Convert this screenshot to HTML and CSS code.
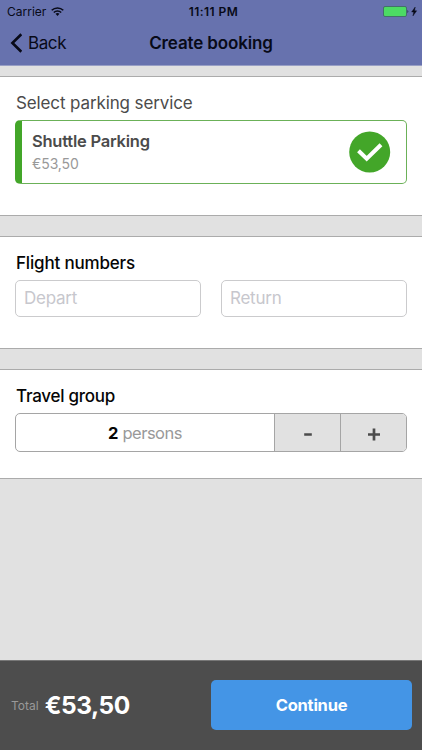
FILE: index.html
```html
<!DOCTYPE html>
<html lang="en">
<head>
<meta charset="utf-8">
<title>Create booking</title>
<link rel="stylesheet" href="styles.css">
</head>
<body>
<div class="app">
  <header class="header">
    <div class="status">
      <div class="carrier"><span class="t-carrier">Carrier</span>
        <svg width="13" height="9" viewBox="0 0 13 9"><g fill="none" stroke="#080a18" stroke-width="1.5"><path d="M.7 3.3a8.3 8.3 0 0 1 11.6 0"/><path d="M2.8 5.5a5.3 5.3 0 0 1 7.4 0"/></g><path d="M4.5 6.8a3 3 0 0 1 4 0L6.5 8.9z" fill="#080a18"/></svg>
      </div>
      <div class="time">11:11 PM</div>
      <svg class="battery" width="35" height="11" viewBox="0 0 35 11"><rect x=".5" y=".5" width="23" height="10" rx="1.5" fill="#4cdb64" stroke="#3d6262" stroke-width=".8"/><path d="M24.5 3.7q1.8 1.8 0 3.6z" fill="#1c2c3b"/><path d="M32.2 1 28.6 6h2.1l-.8 4 3.8-5.2h-2.1z" fill="#080a18" stroke="#080a18" stroke-width=".4"/></svg>
    </div>
    <nav class="nav">
      <div class="back"><svg width="12" height="20" viewBox="0 0 12 20"><path d="M11.300 1.300 2.400 10l8.900 8.700" fill="none" stroke="#080a18" stroke-width="2.600"/></svg><span class="t-back">Back</span></div>
      <div class="title">Create booking</div>
    </nav>
  </header>
  <main class="content">
    <section class="panel panel-service">
      <h2 class="heading muted">Select parking service</h2>
      <div class="service">
        <div class="service-info">
          <div class="name">Shuttle Parking</div>
          <div class="price">€53,50</div>
        </div>
        <svg width="42" height="42" viewBox="0 0 42 42"><circle cx="20.700" cy="21" r="20.500" fill="#43a629"/><path d="m9.500 19.800 8.200 8L32 13.800" fill="none" stroke="#fff" stroke-width="4"/></svg>
      </div>
    </section>
    <section class="panel panel-flights">
      <h2 class="heading h-flight">Flight numbers</h2>
      <div class="fields">
        <div class="field"><span class="t-depart">Depart</span></div>
        <div class="field"><span class="t-return">Return</span></div>
      </div>
    </section>
    <section class="panel panel-group">
      <h2 class="heading h-travel">Travel group</h2>
      <div class="stepper">
        <div class="count"><b>2</b><span class="persons">persons</span></div>
        <div class="step"><svg width="16" height="16" viewBox="0 0 16 16"><path d="M4.200 8.500h7.600" stroke="#4b4b4b" stroke-width="2.700"/></svg></div>
        <div class="step"><svg width="16" height="16" viewBox="0 0 16 16"><path d="M2 8.500h12M8 2.500v12" stroke="#4b4b4b" stroke-width="2.700"/></svg></div>
      </div>
    </section>
  </main>
  <footer class="footer">
    <div class="total"><span class="total-label">Total</span><span class="total-value">€53,50</span></div>
    <div class="continue">Continue</div>
  </footer>
</div>
</body>
</html>
```
FILE: styles.css
```css
* { box-sizing: border-box; }
body { margin: 0; font-family: Inter, "Liberation Sans", sans-serif; color: #050505; }
svg { display: block; flex: none; }
.app { height: 750px; display: flex; flex-direction: column; background: #e1e1e1; overflow: hidden; white-space: nowrap; }
.header { height: 66px; flex: none; background: #6772ae; border-bottom: 1px solid #989fc5; color: #080a18; }
.status { height: 22px; display: grid; grid-template-columns: 1fr auto 1fr; align-items: center; padding: 0 4px 0 7px; font-size: 12px; }
.carrier { display: flex; align-items: center; gap: 5px; }
.time { font-weight: 600; font-size: 12px; padding-left: 2px; letter-spacing: .42px; }
.battery { justify-self: end; }
.nav { height: 42px; display: grid; grid-template-columns: 1fr auto 1fr; align-items: center; padding: 0 10px; font-size: 17px; }
.back { display: flex; align-items: center; gap: 6px; }
.t-back { letter-spacing: -.4px; }
.title { font-weight: 600; letter-spacing: -.14px; }
.content { padding-top: 10px; display: flex; flex-direction: column; gap: 20px; flex: 1; }
.panel { background: #fff; border: solid #ababab; border-width: 1px 0; padding: 15px 15px 0; }
.panel-service { height: 140px; }
.panel-flights { height: 113px; }
.panel-group { height: 110px; }
.heading { margin: 0; padding-left: 1px; font-size: 17px; line-height: 22px; font-weight: 500; letter-spacing: -.18px; }
.h-travel { letter-spacing: -.25px; }
.muted { color: #4b4b4b; font-weight: 400; letter-spacing: -.12px; }
.service { margin-top: 6px; height: 64px; border: 1px solid #6bb158; border-left: 7px solid #43a629; border-radius: 5px; display: flex; justify-content: space-between; align-items: center; padding: 0 15px 0 10px; }
.name { font-size: 16.5px; line-height: 22px; font-weight: 600; letter-spacing: -.23px; color: #4b4b4b; }
.price { font-size: 14px; line-height: 20px; margin-top: 2px; letter-spacing: -.1px; color: #999; }
.fields { display: grid; grid-template-columns: 1fr 1fr; gap: 20px; margin-top: 6px; }
.field { height: 37px; border: 1px solid #cbcbcd; border-radius: 5px; padding-left: 8px; font-size: 17px; line-height: 35px; letter-spacing: -.25px; color: #c7c7cd; }
.stepper { display: flex; height: 39px; margin-top: 6px; border: 1px solid #a5a5a5; border-radius: 5px; overflow: hidden; }
.count { flex: 1; display: flex; justify-content: center; align-items: center; gap: 4px; font-size: 16.5px; }
.persons { color: #999; letter-spacing: -.5px; }
.step { width: 66px; border-left: 1px solid #a5a5a5; background: #e1e1e1; display: flex; justify-content: center; align-items: center; padding-top: 2px; }
.footer { height: 90px; flex: none; background: #4d4d4d; border-top: 1px solid #777; display: flex; justify-content: space-between; align-items: center; padding: 0 10px 1px 11px; }
.total { display: flex; align-items: center; gap: 6px; }
.total-label { font-size: 12px; color: #999; }
.total-value { font-size: 24.5px; font-weight: 700; letter-spacing: -.45px; color: #fff; }
.continue { width: 201px; height: 50px; border-radius: 5px; background: #4495e6; color: #fff; font-size: 16.5px; font-weight: 700; letter-spacing: -.25px; line-height: 50px; text-align: center; }
```
